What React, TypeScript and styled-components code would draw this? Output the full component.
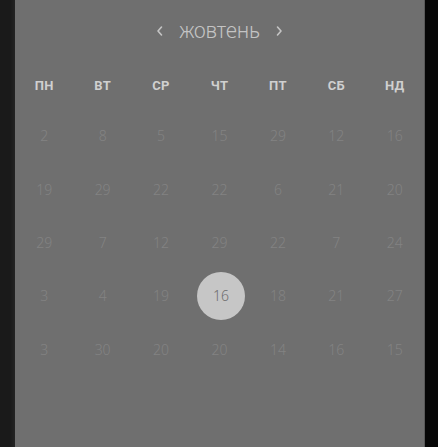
import React from "react";
import styled, { createGlobalStyle } from "styled-components";

const Global = createGlobalStyle`
  html, body { margin: 0; padding: 0; background: #1b1b1b; }
  body { font-family: "Noto Sans", "Liberation Sans", sans-serif; }
`;

const Frame = styled.div`
  display: flex;
  width: 438px;
  height: 447px;
  overflow: hidden;
`;

const LeftEdge = styled.div`
  width: 15px;
  flex: none;
  background: linear-gradient(to right, #1a1a1a 0, #1a1a1a 10px, #242424 15px);
`;

const RightEdge = styled.div`
  flex: 1;
  background: #070707;
  border-left: 1px solid #5a5a5a;
`;

const Panel = styled.div`
  width: 409px;
  flex: none;
  background: #6f6f6f;
  display: flex;
  flex-direction: column;
`;

const Header = styled.div`
  height: 62px;
  display: flex;
  align-items: center;
  justify-content: center;
  gap: 14px;
  color: #c4c4c4;
`;

const Month = styled.span`
  font-family: "Noto Sans", sans-serif;
  font-weight: 300;
  font-size: 21px;
  letter-spacing: -0.2px;
  line-height: 1;
  padding-bottom: 2px;
`;

const NavButton = styled.span`
  display: inline-flex;
  width: 10px;
  justify-content: center;
`;

const WeekRow = styled.div`
  margin-top: 8px;
  height: 30px;
  display: grid;
  grid-template-columns: repeat(7, 1fr);
  align-items: center;
`;

const WeekDay = styled.span`
  text-align: center;
  font-family: "Roboto", "Liberation Sans", sans-serif;
  font-weight: 700;
  font-size: 13px;
  color: #d0d0d0;
  letter-spacing: 0.3px;
`;

const Days = styled.div`
  margin-top: 9px;
  display: grid;
  grid-template-columns: repeat(7, 1fr);
  grid-auto-rows: 53.4px;
  align-items: center;
  justify-items: center;
`;

const Day = styled.span<{ $selected?: boolean }>`
  display: flex;
  align-items: center;
  justify-content: center;
  width: 48px;
  height: 48px;
  border-radius: 50%;
  margin-left: ${(p) => (p.$selected ? "3px" : "0")};
  font-family: "Noto Sans", sans-serif;
  font-weight: 300;
  font-size: 14px;
  color: ${(p) => (p.$selected ? "#6c6c6c" : "#838383")};
  background: ${(p) => (p.$selected ? "#c6c6c6" : "transparent")};
`;

const Chevron = ({ dir }: { dir: "left" | "right" }) => (
  <svg width="8" height="12" viewBox="0 0 8 12">
    <path
      d={dir === "left" ? "M5.5 2 L2 6 L5.5 10" : "M2.5 2 L6 6 L2.5 10"}
      fill="none"
      stroke="#c4c4c4"
      strokeWidth="1.6"
      strokeLinecap="round"
      strokeLinejoin="round"
    />
  </svg>
);

const weekDays = ["ПН", "ВТ", "СР", "ЧТ", "ПТ", "СБ", "НД"];
const rows = [
  [2, 8, 5, 15, 29, 12, 16],
  [19, 29, 22, 22, 6, 21, 20],
  [29, 7, 12, 29, 22, 7, 24],
  [3, 4, 19, 16, 18, 21, 27],
  [3, 30, 20, 20, 14, 16, 15],
];

export default function App() {
  return (
    <>
      <Global />
      <Frame>
        <LeftEdge />
        <Panel>
          <Header>
            <NavButton>
              <Chevron dir="left" />
            </NavButton>
            <Month>жовтень</Month>
            <NavButton>
              <Chevron dir="right" />
            </NavButton>
          </Header>
          <WeekRow>
            {weekDays.map((d) => (
              <WeekDay key={d}>{d}</WeekDay>
            ))}
          </WeekRow>
          <Days>
            {rows.map((r, ri) =>
              r.map((n, ci) => (
                <Day key={`${ri}-${ci}`} $selected={ri === 3 && ci === 3}>
                  {n}
                </Day>
              ))
            )}
          </Days>
        </Panel>
        <RightEdge />
      </Frame>
    </>
  );
}
